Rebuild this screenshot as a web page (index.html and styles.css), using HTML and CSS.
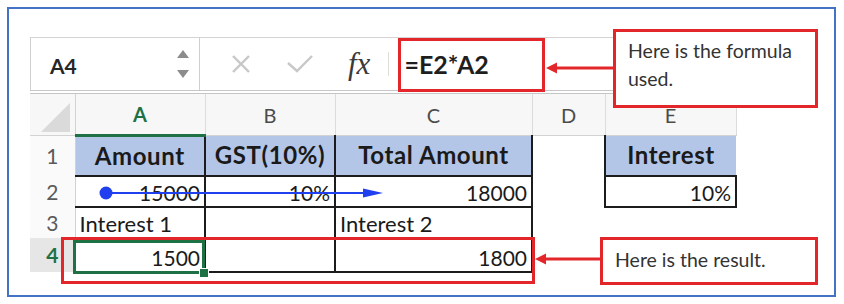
FILE: index.html
```html
<!DOCTYPE html>
<html lang="en">
<head>
    <meta charset="UTF-8">
    <meta name="viewport" content="width=device-width, initial-scale=1.0">
    <title>Interest formula</title>
    <link rel="stylesheet" href="styles.css">
</head>
<body>
    <div class="frame">
        <div class="sheet">
            <!-- Formula bar -->
            <div class="formula-bar">
                <div class="name-box">
                    <span class="cell-ref">A4</span>
                    <svg class="spinner" width="14" height="32" viewBox="0 0 14 32">
                        <polygon points="1,10 7,2 13,10" />
                        <polygon points="1,22 7,30 13,22" />
                    </svg>
                </div>
                <div class="fx-tools">
                    <svg class="tool-x" width="20" height="20" viewBox="0 0 20 20">
                        <line x1="2" y1="2" x2="18" y2="18" />
                        <line x1="18" y1="2" x2="2" y2="18" />
                    </svg>
                    <svg class="tool-check" width="26" height="18" viewBox="0 0 26 18">
                        <polyline points="1,8 10,16 25,1" />
                    </svg>
                    <span class="fx">fx</span>
                    <span class="fx-sep"></span>
                </div>
                <div class="formula-input">=E2*A2</div>
            </div>

            <!-- Grid -->
            <table class="grid">
                <colgroup>
                    <col class="c-num">
                    <col class="c-a">
                    <col class="c-b">
                    <col class="c-c">
                    <col class="c-d">
                    <col class="c-e">
                </colgroup>
                <tr class="col-heads">
                    <th class="corner"><span class="corner-tri"></span></th>
                    <th class="active">A</th>
                    <th>B</th>
                    <th>C</th>
                    <th>D</th>
                    <th>E</th>
                </tr>
                <tr class="row-1">
                    <th class="row-num">1</th>
                    <td class="head br bb">Amount</td>
                    <td class="head br bb">GST(10%)</td>
                    <td class="head br bb">Total Amount</td>
                    <td></td>
                    <td class="head bl bb">Interest</td>
                </tr>
                <tr class="row-2">
                    <th class="row-num">2</th>
                    <td class="num br bb">15000</td>
                    <td class="num br bb">10%</td>
                    <td class="num br bb">18000</td>
                    <td></td>
                    <td class="num bl br bb">10%</td>
                </tr>
                <tr class="row-3">
                    <th class="row-num">3</th>
                    <td class="br bb">Interest 1</td>
                    <td class="br bb"></td>
                    <td class="br bb">Interest 2</td>
                    <td></td>
                    <td></td>
                </tr>
                <tr class="row-4">
                    <th class="row-num active">4</th>
                    <td class="num br bb">1500</td>
                    <td class="br bb"></td>
                    <td class="num bl br bb">1800</td>
                    <td></td>
                    <td></td>
                </tr>
            </table>
        </div>

        <!-- Annotations -->
        <div class="selection"><span class="fill-handle"></span></div>
        <div class="mark mark-formula"></div>
        <div class="mark mark-row"></div>
        <div class="callout callout-formula">Here is the formula used.</div>
        <div class="callout callout-result">Here is the result.</div>

        <svg class="arrows" width="825" height="286" viewBox="0 0 825 286">
            <g class="trace">
                <circle cx="97" cy="184" r="6.5" />
                <line x1="97" y1="184" x2="356" y2="184" />
                <polygon points="354,179.5 374,184 354,188.5" />
            </g>
            <g class="pointer">
                <line x1="544" y1="59" x2="605" y2="59" />
                <polygon points="537,59 548,53.5 548,64.5" />
                <line x1="533" y1="250" x2="592" y2="250" />
                <polygon points="526,250 537,244.5 537,255.5" />
            </g>
        </svg>
    </div>
</body>
</html>
```

FILE: styles.css
```css
body {
    margin: 0;
    background: #ffffff;
    font-family: Lato, "Open Sans", sans-serif;
    color: #1a1a1a;
}

.frame {
    position: relative;
    box-sizing: border-box;
    width: 829px;
    height: 290px;
    margin: 7px 0 0 7px;
    padding: 28px 0 0 21px;
    border: 2px solid #4472c4;
}

.sheet {
    width: 706px;
}

/* Formula bar */
.formula-bar {
    display: flex;
    box-sizing: border-box;
    height: 57px;
    border-top: 1px solid #d4d4d4;
    border-bottom: 4px double #c6c6c6;
}
.name-box {
    display: flex;
    align-items: center;
    justify-content: space-between;
    box-sizing: border-box;
    width: 170px;
    padding: 0 9px 0 19px;
    border-left: 1px solid #cfcfcf;
    border-right: 1px solid #cfcfcf;
}
.cell-ref {
    font-size: 21px;
    font-weight: bold;
    color: #262626;
    margin-top: 2px;
}
.spinner polygon {
    fill: #8c8c8c;
}
.fx-tools {
    display: flex;
    align-items: center;
    padding-left: 31px;
}
.tool-x line,
.tool-check polyline {
    fill: none;
    stroke: #c8c8c8;
    stroke-width: 2.4;
}
.tool-check {
    margin-left: 36px;
}
.fx {
    margin-left: 35px;
    font-family: "Liberation Serif", "DejaVu Serif", serif;
    font-style: italic;
    font-size: 31px;
    color: #3a3a3a;
}
.fx-sep {
    width: 1px;
    height: 24px;
    margin-left: 18px;
    background: #dddddd;
}
.formula-input {
    flex: 1;
    display: flex;
    align-items: center;
    padding-left: 15px;
    font-size: 25px;
    font-weight: bold;
    color: #1e1e1e;
}

/* Grid */
.grid {
    table-layout: fixed;
    border-collapse: collapse;
    width: 706px;
}
.c-num { width: 45px; }
.c-a { width: 130px; }
.c-b { width: 130px; }
.c-c { width: 197px; }
.c-d { width: 73px; }
.c-e { width: 131px; }

.grid th,
.grid td {
    padding: 0 4px;
    overflow: hidden;
    white-space: nowrap;
}
.col-heads th {
    height: 40px;
    background: #f7f7f7;
    border-right: 1px solid #dcdcdc;
    border-bottom: 1px solid #d2d2d2;
    font-size: 20px;
    font-weight: normal;
    color: #4b4b4b;
}
.col-heads th.active {
    color: #1e7145;
    font-weight: bold;
    border-bottom: 3px solid #1e7145;
}
.col-heads th.corner {
    position: relative;
    border-right: 1px solid #d2d2d2;
}
.corner-tri {
    position: absolute;
    right: 5px;
    bottom: 3px;
    border-style: solid;
    border-width: 0 0 29px 29px;
    border-color: transparent transparent #dadada transparent;
}
.row-num {
    background: #fafafa;
    border-right: 1px solid #d2d2d2;
    font-size: 21px;
    font-weight: normal;
    color: #5a5a5a;
    text-align: center;
}
.row-num.active {
    background: #e6e6e6;
    color: #1e7145;
    font-weight: bold;
}
.grid td {
    font-size: 22px;
    line-height: 26px;
    color: #1a1a1a;
    vertical-align: bottom;
}
.row-1 { height: 40px; }
.row-2 { height: 31px; }
.row-3 { height: 31px; }
.row-4 { height: 34px; }

.grid td.head {
    background: #b4c6e7;
    font-weight: bold;
    font-size: 24px;
    letter-spacing: 0.6px;
    text-align: center;
    vertical-align: middle;
}
.grid td.num {
    text-align: right;
    font-size: 21px;
}
.bl { border-left: 2px solid #1c1c1c; }
.br { border-right: 2px solid #1c1c1c; }
.bb { border-bottom: 2px solid #1c1c1c; }

/* Annotations */
.selection {
    position: absolute;
    left: 64px;
    top: 231px;
    width: 132px;
    height: 34px;
    box-sizing: border-box;
    border: 3px solid #1e7145;
}
.fill-handle {
    position: absolute;
    right: -7px;
    bottom: -7px;
    width: 8px;
    height: 8px;
    background: #1e7145;
    border: 1px solid #ffffff;
}
.mark {
    position: absolute;
    box-sizing: border-box;
    border: 3px solid #e3262a;
}
.mark-formula {
    left: 389px;
    top: 29px;
    width: 147px;
    height: 54px;
}
.mark-row {
    left: 52px;
    top: 228px;
    width: 474px;
    height: 47px;
}
.callout {
    position: absolute;
    box-sizing: border-box;
    background: #ffffff;
    border: 3px solid #e3262a;
    padding: 5px 12px;
    font-size: 19.5px;
    line-height: 28px;
    color: #333333;
}
.callout-formula {
    left: 604px;
    top: 20px;
    width: 205px;
    height: 79px;
}
.callout-result {
    left: 591px;
    top: 228px;
    width: 218px;
    height: 48px;
    padding-top: 6px;
}
.arrows {
    position: absolute;
    left: 0;
    top: 0;
    pointer-events: none;
}
.trace circle,
.trace polygon {
    fill: #2040f0;
}
.trace line {
    stroke: #2040f0;
    stroke-width: 2;
}
.pointer line {
    stroke: #e3262a;
    stroke-width: 3;
}
.pointer polygon {
    fill: #e3262a;
}
```
